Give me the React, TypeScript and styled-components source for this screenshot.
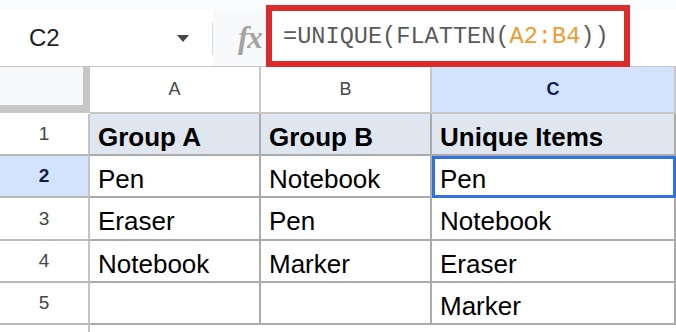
import React from 'react';
import styled, { createGlobalStyle } from 'styled-components';

const GlobalStyle = createGlobalStyle`
  body {
    margin: 0;
    background: #ffffff;
    font-family: "Liberation Sans", Arial, sans-serif;
  }
`;

const Page = styled.div`
  width: 676px;
  height: 332px;
  overflow: hidden;
  background: #ffffff;
`;

const TopStrip = styled.div`
  height: 10px;
  background: #f9fbfd;
`;

const FormulaBar = styled.div`
  display: flex;
  height: 56px;
  align-items: stretch;
`;

const NameBox = styled.div`
  width: 212px;
  display: flex;
  align-items: center;
  padding: 0 23px 0 29px;
  box-sizing: border-box;
  font-size: 24px;
  color: #1f1f1f;
  background: #ffffff;
`;

const NameText = styled.span`
  flex: 1;
`;

const Divider = styled.div`
  width: 1px;
  height: 33px;
  align-self: center;
  background: #d3d9df;
`;

const FxBox = styled.div`
  width: 53px;
  display: flex;
  align-items: center;
  padding-left: 25px;
  box-sizing: border-box;
  background: #f8f9fa;
  font-family: "Liberation Serif", "DejaVu Serif", serif;
  font-style: italic;
  font-weight: bold;
  font-size: 31px;
  letter-spacing: -1px;
  color: #a3a3a3;
`;

const FormulaInput = styled.div`
  flex: 1;
  display: flex;
  align-items: stretch;
  background: #ffffff;
`;

const Highlight = styled.div`
  width: 364px;
  height: 62px;
  margin: -5px 0 -1px 0;
  border: 6px solid #dd2a2a;
  box-sizing: border-box;
  display: flex;
  align-items: center;
  padding-left: 11px;
  background: #ffffff;
  font-family: "Liberation Mono", "DejaVu Sans Mono", monospace;
  font-size: 23.6px;
  color: #5a5a5a;
  white-space: pre;
`;

const Ref = styled.span`
  color: #f29a2e;
`;

const Grid = styled.div`
  display: grid;
  grid-template-columns: 90px 171px 171px 244px;
  grid-template-rows: 47px 42px 42px 43px 42px 42px 1fr;
  height: 266px;
  border-top: 1px solid #c4c7c5;
  box-sizing: border-box;
`;

const Corner = styled.div`
  background: #c7c7c7;
  margin-bottom: 1px;
`;

const CornerFill = styled.div`
  width: 83px;
  height: 38px;
  background: #f8f9fa;
`;

const ColHead = styled.div<{ $active?: boolean }>`
  display: flex;
  align-items: center;
  justify-content: center;
  border-right: 2px solid #c7c7c7;
  border-bottom: 2px solid #c7c7c7;
  background: ${(p) => (p.$active ? '#d3e3fd' : '#ffffff')};
  color: ${(p) => (p.$active ? '#0b1d51' : '#444746')};
  font-weight: ${(p) => (p.$active ? 'bold' : 'normal')};
  font-size: 18px;
`;

const RowHead = styled.div<{ $active?: boolean; $last?: boolean }>`
  display: flex;
  align-items: center;
  justify-content: center;
  border-right: 2px solid #c4c4c4;
  border-bottom: ${(p) => (p.$last ? 'none' : '2px solid #b9b9b9')};
  background: ${(p) => (p.$active ? '#d3e3fd' : '#ffffff')};
  color: ${(p) => (p.$active ? '#0b1d51' : '#444746')};
  font-weight: ${(p) => (p.$active ? 'bold' : 'normal')};
  font-size: 19px;
`;

const Cell = styled.div<{ $head?: boolean; $selected?: boolean; $blank?: boolean }>`
  box-sizing: border-box;
  border-right: ${(p) => (p.$blank ? 'none' : '2px solid #ababab')};
  border-bottom: ${(p) => (p.$blank ? 'none' : '2px solid #ababab')};
  background: ${(p) => (p.$head ? '#dfe6ef' : '#ffffff')};
  font-weight: ${(p) => (p.$head ? 'bold' : 'normal')};
  font-size: 26px;
  color: #000000;
  line-height: 40px;
  padding: 3px 0 0 8px;
  overflow: hidden;
  white-space: nowrap;
  ${(p) =>
    p.$selected &&
    `
    border: 3px solid #3171e0;
    line-height: 36px;
    padding: 2px 0 0 5px;
  `}
`;

const Caret = () => (
  <svg width="12" height="7" viewBox="0 0 12 7">
    <polygon points="0,0 12,0 6,7" fill="#444746" />
  </svg>
);

const columns = ['A', 'B', 'C'];

const rows: string[][] = [
  ['Group A', 'Group B', 'Unique Items'],
  ['Pen', 'Notebook', 'Pen'],
  ['Eraser', 'Pen', 'Notebook'],
  ['Notebook', 'Marker', 'Eraser'],
  ['', '', 'Marker'],
];

const App: React.FC = () => {
  return (
    <Page>
      <GlobalStyle />
      <TopStrip />
      <FormulaBar>
        <NameBox>
          <NameText>C2</NameText>
          <Caret />
        </NameBox>
        <Divider />
        <FxBox>fx</FxBox>
        <FormulaInput>
          <Highlight>
            =UNIQUE(FLATTEN(<Ref>A2:B4</Ref>))
          </Highlight>
        </FormulaInput>
      </FormulaBar>
      <Grid>
        <Corner>
          <CornerFill />
        </Corner>
        {columns.map((c) => (
          <ColHead key={c} $active={c === 'C'}>
            {c}
          </ColHead>
        ))}
        {rows.map((row, r) => (
          <React.Fragment key={r}>
            <RowHead $active={r === 1}>{r + 1}</RowHead>
            {row.map((value, c) => (
              <Cell key={c} $head={r === 0} $selected={r === 1 && c === 2}>
                {value}
              </Cell>
            ))}
          </React.Fragment>
        ))}
        <RowHead $last />
        <Cell $blank />
        <Cell $blank />
        <Cell $blank />
      </Grid>
    </Page>
  );
};

export default App;
